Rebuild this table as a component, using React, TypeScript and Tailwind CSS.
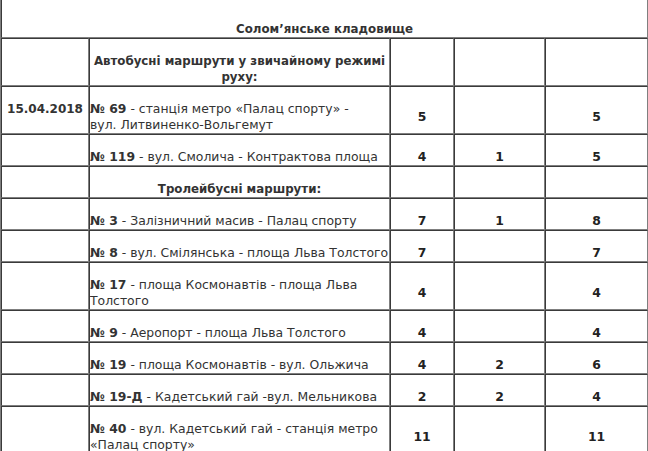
import React from "react";

const FONT = { fontFamily: '"DejaVu Sans", Verdana, sans-serif' };

const BORDER =
  "border-t border-l border-b border-r border-t-[#3a3a3a] border-l-[#3a3a3a] border-b-[#7f7f7f] border-r-[#7f7f7f]";

function Num({ v, tall }: { v: string; tall?: boolean }) {
  return (
    <div
      className={
        BORDER +
        (tall ? " h-[48px]" : " h-[32px]") +
        " flex flex-col justify-center items-center"
      }
    >
      <div className="mt-[14px] leading-[16px] font-bold text-[12.4px] text-[#222]">{v || "\u00a0"}</div>
    </div>
  );
}

function Route({ children, tall }: { children: React.ReactNode; tall?: boolean }) {
  return (
    <div
      className={
        BORDER +
        (tall ? " h-[48px]" : " h-[32px]") +
        " flex flex-col justify-end"
      }
    >
      <div className="leading-[16px] whitespace-nowrap text-[12.4px] text-[#333]">{children}</div>
    </div>
  );
}

function DateCell({ v, tall }: { v?: string; tall?: boolean }) {
  return (
    <div
      className={
        BORDER +
        (tall ? " h-[48px]" : " h-[32px]") +
        " flex flex-col justify-start items-center"
      }
    >
      <div className="mt-[14px] leading-[16px] font-bold text-[#333]">{v || "\u00a0"}</div>
    </div>
  );
}

function Row({
  date,
  route,
  a,
  b,
  c,
  tall,
}: {
  date?: string;
  route: React.ReactNode;
  a: string;
  b: string;
  c: string;
  tall?: boolean;
}) {
  return (
    <>
      <DateCell v={date} tall={tall} />
      <Route tall={tall}>{route}</Route>
      <Num v={a} tall={tall} />
      <Num v={b} tall={tall} />
      <Num v={c} tall={tall} />
    </>
  );
}

export default function App() {
  return (
    <div className="w-[648px] h-[451px] overflow-hidden bg-white" style={FONT}>
      <div className="grid grid-cols-[88px_301px_64px_91px_103px] text-[12px] border-l border-l-[#7f7f7f] w-[648px]">
        <div className="col-span-5 h-[38px] border-l border-b border-r border-l-[#3a3a3a] border-b-[#7f7f7f] border-r-[#7f7f7f] flex items-end justify-center">
          <div className="leading-[16px] font-bold text-[11.8px] text-[#333]">Солом’янське кладовище</div>
        </div>

        <DateCell tall />
        <div className={BORDER + " h-[48px] flex flex-col justify-end items-center text-center"}>
          <div className="leading-[16px] font-bold text-[11.8px] text-[#333] whitespace-nowrap">
            Автобусні маршрути у звичайному режимі
            <br />
            руху:
          </div>
        </div>
        <Num v="" tall />
        <Num v="" tall />
        <Num v="" tall />

        <Row
          tall
          date="15.04.2018"
          route={
            <>
              <b>№ 69</b> - станція метро «Палац спорту» -
              <br />
              вул. Литвиненко-Вольгемут
            </>
          }
          a="5"
          b=""
          c="5"
        />
        <Row
          route={
            <>
              <b>№ 119</b> - вул. Смолича - Контрактова площа
            </>
          }
          a="4"
          b="1"
          c="5"
        />

        <DateCell />
        <div className={BORDER + " h-[32px] flex flex-col justify-end items-center"}>
          <div className="leading-[16px] font-bold text-[11.8px] text-[#333]">Тролейбусні маршрути:</div>
        </div>
        <Num v="" />
        <Num v="" />
        <Num v="" />

        <Row
          route={
            <>
              <b>№ 3</b> - Залізничний масив - Палац спорту
            </>
          }
          a="7"
          b="1"
          c="8"
        />
        <Row
          route={
            <>
              <b>№ 8</b> - вул. Смілянська - площа Льва Толстого
            </>
          }
          a="7"
          b=""
          c="7"
        />
        <Row
          tall
          route={
            <>
              <b>№ 17</b> - площа Космонавтів - площа Льва
              <br />
              Толстого
            </>
          }
          a="4"
          b=""
          c="4"
        />
        <Row
          route={
            <>
              <b>№ 9</b> - Аеропорт - площа Льва Толстого
            </>
          }
          a="4"
          b=""
          c="4"
        />
        <Row
          route={
            <>
              <b>№ 19</b> - площа Космонавтів - вул. Ольжича
            </>
          }
          a="4"
          b="2"
          c="6"
        />
        <Row
          route={
            <>
              <b>№ 19-Д</b> - Кадетський гай -вул. Мельникова
            </>
          }
          a="2"
          b="2"
          c="4"
        />
        <Row
          tall
          route={
            <>
              <b>№ 40</b> - вул. Кадетський гай - станція метро
              <br />
              «Палац спорту»
            </>
          }
          a="11"
          b=""
          c="11"
        />
      </div>
    </div>
  );
}
